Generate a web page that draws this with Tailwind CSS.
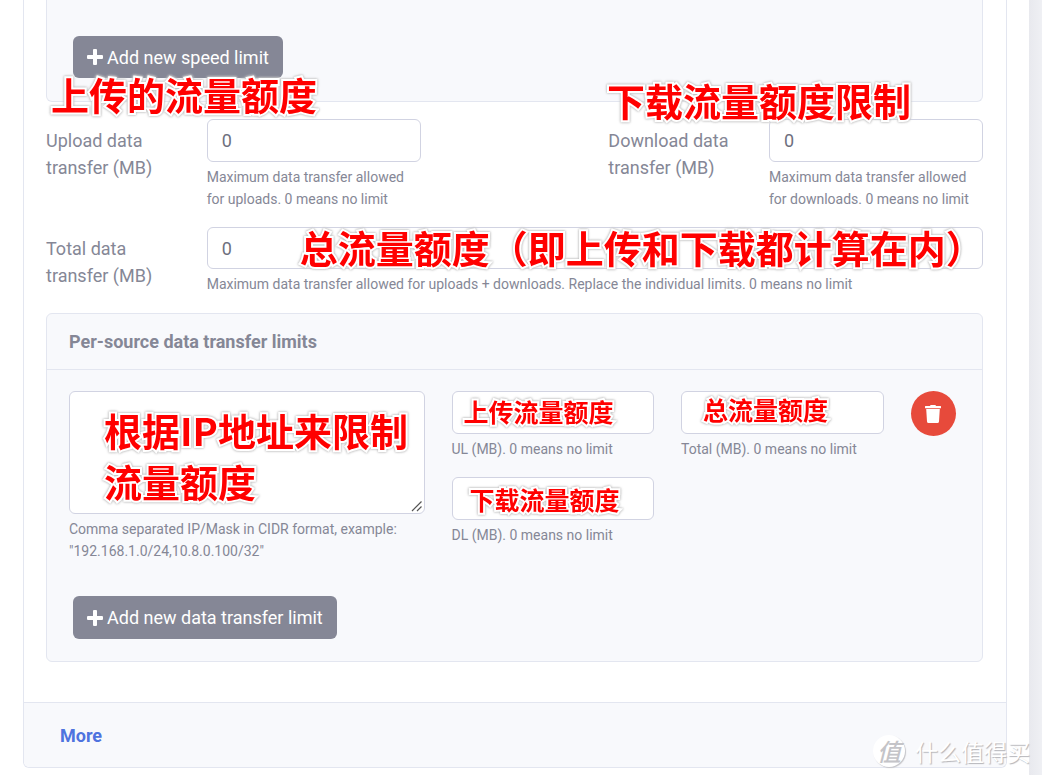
<!DOCTYPE html>
<html lang="en">
  <head>
    <meta charset="UTF-8" />
    <meta name="viewport" content="width=device-width, initial-scale=1.0" />
    <title>Data transfer limits</title>
    <script src="https://cdn.jsdelivr.net/npm/@tailwindcss/browser@4"></script>
    <style>
      .note {
        position: absolute;
        z-index: 10;
        white-space: nowrap;
        pointer-events: none;
        color: #ff0000;
        font-family: "Noto Sans CJK SC", sans-serif;
        font-weight: 700;
        -webkit-text-stroke: 4px #ffffff;
        paint-order: stroke fill;
        filter: drop-shadow(0 0 1px #b4b4b4) drop-shadow(0 0 1px #dddddd);
      }
    </style>
  </head>
  <body
    class="bg-white min-h-screen overflow-hidden font-['Roboto','Noto_Sans_CJK_SC',sans-serif] text-lg leading-[27px] text-[#858796]"
  >
    <div class="relative flex">
      <!-- Card -->
      <main
        class="ml-[23px] mr-[22px] mb-[7px] grow border border-t-0 border-[#e3e6f0] rounded-b-md bg-white"
      >
        <form class="pl-[22px] pr-[23px] pb-10">
          <!-- Speed limits -->
          <section
            class="relative border border-t-0 border-[#e3e6f0] rounded-b-md bg-[#f8f9fc] px-[26px] pt-9 pb-[23px]"
          >
            <button
              type="button"
              class="flex items-center gap-1 h-[42px] px-3.5 rounded-md bg-[#858796] text-white"
            >
              <svg class="w-4 h-4" viewBox="0 0 16 16" fill="currentColor">
                <path
                  d="M7 0h2a1 1 0 0 1 1 1v5h5a1 1 0 0 1 1 1v2a1 1 0 0 1-1 1h-5v5a1 1 0 0 1-1 1H7a1 1 0 0 1-1-1v-5H1a1 1 0 0 1-1-1V7a1 1 0 0 1 1-1h5V1a1 1 0 0 1 1-1z"
                />
              </svg>
              Add new speed limit
            </button>
            <span class="note left-1 top-[74px] text-[38px] leading-10">上传的流量额度</span>
            <span class="note left-[560px] top-20 text-[38px] leading-10">下载流量额度限制</span>
          </section>

          <!-- Upload / download -->
          <div class="mt-[17px] grid grid-cols-12 gap-x-[27px]">
            <label for="upload" class="col-span-2 pt-2">Upload data transfer (MB)</label>
            <div class="col-span-3">
              <input
                id="upload"
                type="text"
                value="0"
                class="block w-full h-[43px] px-3.5 border border-[#d1d3e2] rounded-md bg-white text-[#6e707e]"
              />
              <small class="block mt-1 text-sm leading-[22px]">Maximum data transfer allowed for uploads. 0 means no limit</small>
            </div>
            <label for="download" class="col-span-2 col-start-8 pt-2">Download data transfer (MB)</label>
            <div class="col-span-3">
              <input
                id="download"
                type="text"
                value="0"
                class="block w-full h-[43px] px-3.5 border border-[#d1d3e2] rounded-md bg-white text-[#6e707e]"
              />
              <small class="block mt-1 text-sm leading-[22px]">Maximum data transfer allowed for downloads. 0 means no limit</small>
            </div>
          </div>

          <!-- Total -->
          <div class="mt-[17px] grid grid-cols-12 gap-x-[27px]">
            <label for="total" class="col-span-2 pt-2">Total data transfer (MB)</label>
            <div class="relative col-span-10">
              <input
                id="total"
                type="text"
                value="0"
                class="block w-full h-[42px] px-3.5 border border-[#d1d3e2] rounded-md bg-white text-[#6e707e]"
              />
              <small class="block mt-1 text-sm leading-[22px]">Maximum data transfer allowed for uploads + downloads. Replace the individual limits. 0 means no limit</small>
              <span class="note left-[93px] top-0 text-[38px] leading-10">总流量额度（即上传和下载都计算在内）</span>
            </div>
          </div>

          <!-- Per-source limits -->
          <section class="mt-[18px] border border-[#e3e6f0] rounded-md bg-[#f8f9fc]">
            <h2 class="px-[22px] py-3.5 border-b border-[#e3e6f0] font-bold">
              Per-source data transfer limits
            </h2>
            <div class="px-[22px] pt-[21px] pb-[22px]">
              <div class="grid grid-cols-12 gap-x-[27px]">
                <div class="relative col-span-5">
                  <div class="relative">
                    <textarea
                      aria-label="Sources"
                      aria-describedby="sources-help"
                      class="block w-full h-[123px] px-3.5 py-2 border border-[#d1d3e2] rounded-md bg-white text-[#6e707e] resize-none"
                    ></textarea>
                    <svg
                      class="absolute right-0.5 bottom-0.5 w-3 h-3 pointer-events-none"
                      viewBox="0 0 12 12"
                      fill="none"
                      stroke="#555555"
                      stroke-width="1.2"
                    >
                      <path d="M1 11 10.500 1.500M6 11l4.500-4.500" />
                    </svg>
                  </div>
                  <small id="sources-help" class="block mt-1 text-sm leading-[22px]">Comma separated IP/Mask in CIDR format, example: "192.168.1.0/24,10.8.0.100/32"</small>
                  <p class="note left-[35px] top-[13px] text-[38px] leading-[51px]">
                    根据IP地址来限制<br />流量额度
                  </p>
                </div>
                <div class="col-span-3">
                  <div class="relative">
                    <input
                      id="ul"
                      type="text"
                      class="block w-full h-[43px] px-3.5 border border-[#d1d3e2] rounded-md bg-white text-[#6e707e]"
                    />
                    <label for="ul" class="block mt-1 text-sm leading-[22px]">UL (MB). 0 means no limit</label>
                    <span class="note left-3 top-1 text-[25px] leading-8">上传流量额度</span>
                  </div>
                  <div class="relative mt-[17px]">
                    <input
                      id="dl"
                      type="text"
                      class="block w-full h-[43px] px-3.5 border border-[#d1d3e2] rounded-md bg-white text-[#6e707e]"
                    />
                    <label for="dl" class="block mt-1 text-sm leading-[22px]">DL (MB). 0 means no limit</label>
                    <span class="note left-[18px] top-1.5 text-[25px] leading-8">下载流量额度</span>
                  </div>
                </div>
                <div class="relative col-span-3">
                  <input
                    id="source-total"
                    type="text"
                    class="block w-full h-[43px] px-3.5 border border-[#d1d3e2] rounded-md bg-white text-[#6e707e]"
                  />
                  <label for="source-total" class="block mt-1 text-sm leading-[22px]">Total (MB). 0 means no limit</label>
                  <span class="note left-[22px] top-0.5 text-[25px] leading-8">总流量额度</span>
                </div>
                <div>
                  <button
                    type="button"
                    aria-label="Delete"
                    class="flex items-center justify-center w-[45px] h-[45px] rounded-full bg-[#e74a3b] text-white"
                  >
                    <svg class="w-4 h-[18px]" viewBox="0 0 16 18" fill="currentColor">
                      <path
                        d="M.5 1h4.400l.5-.7a.8.8 0 0 1 .6-.3h4a.8.8 0 0 1 .6.3l.5.7h4.400a.5.5 0 0 1 .5.500v1.300a.5.5 0 0 1-.5.500H.5a.5.5 0 0 1-.5-.5V1.500A.5.5 0 0 1 .5 1z"
                      />
                      <path d="M1.200 4h13.600l-.8 12.500a1.600 1.600 0 0 1-1.600 1.500H3.600A1.600 1.600 0 0 1 2 16.500z" />
                    </svg>
                  </button>
                </div>
              </div>
              <button
                type="button"
                class="ml-1 mt-[34px] flex items-center gap-1 h-[43px] px-3.5 rounded-md bg-[#858796] text-white"
              >
                <svg class="w-4 h-4" viewBox="0 0 16 16" fill="currentColor">
                  <path
                    d="M7 0h2a1 1 0 0 1 1 1v5h5a1 1 0 0 1 1 1v2a1 1 0 0 1-1 1h-5v5a1 1 0 0 1-1 1H7a1 1 0 0 1-1-1v-5H1a1 1 0 0 1-1-1V7a1 1 0 0 1 1-1h5V1a1 1 0 0 1 1-1z"
                  />
                </svg>
                Add new data transfer limit
              </button>
            </div>
          </section>
        </form>

        <!-- Card footer -->
        <div class="border-t border-[#e3e6f0] rounded-b-md bg-[#f8f9fc] px-9 pt-[19px] pb-[18px]">
          <a href="#" class="font-bold text-[#4e73df]">More</a>
        </div>
      </main>

      <!-- Page edge -->
      <div class="w-[13px] shrink-0 bg-linear-to-r from-[#e8e9ee] to-[#eff0f4]"></div>

      <!-- Watermark -->
      <div
        class="absolute right-3 bottom-2 flex items-center gap-2.5 font-['Noto_Sans_CJK_SC',sans-serif] pointer-events-none"
      >
        <span
          class="flex items-center justify-center w-8 h-8 rounded-full bg-white text-[#c4c4c8] text-2xl font-medium italic shadow-[1px_1px_1px_#c4c4c8]"
          >值</span
        >
        <span class="text-[23px] leading-8 text-white [text-shadow:1px_1px_1px_#b4b4b8]">什么值得买</span>
      </div>
    </div>
  </body>
</html>
